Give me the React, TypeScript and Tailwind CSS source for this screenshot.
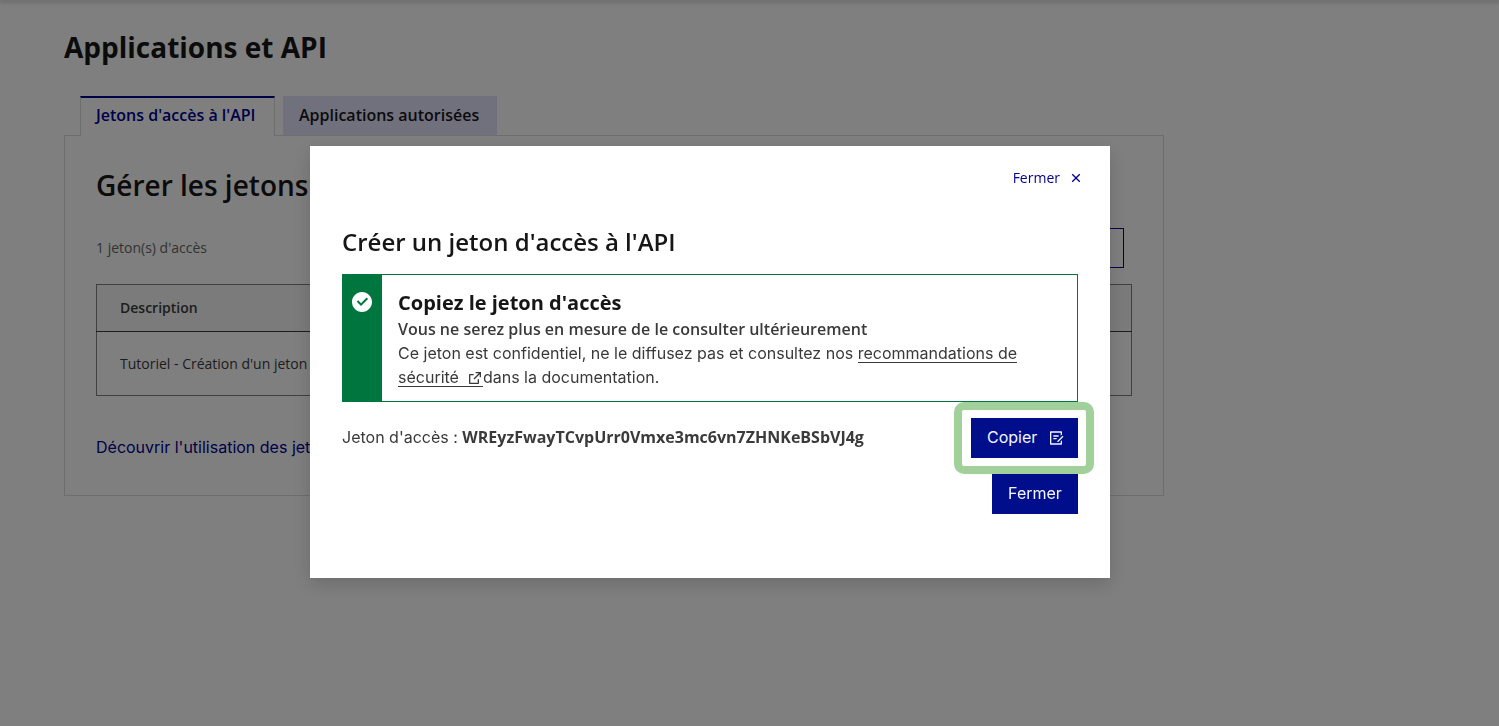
import React from "react";
import { RiCheckboxCircleFill, RiCloseLine, RiDraftLine, RiExternalLinkLine } from "react-icons/ri";

function Tabs() {
  return (
    <div role="tablist" className="relative z-10 -mb-px flex gap-2 px-4 text-base font-semibold leading-6">
      <button
        role="tab"
        aria-selected="true"
        className="h-10 w-[195px] whitespace-nowrap border-x border-t-2 border-x-[#dddddd] border-t-[#000091] bg-white px-[15px] pb-1 text-left text-[#000091]"
      >
        Jetons d'accès à l'API
      </button>
      <button
        role="tab"
        aria-selected="false"
        className="h-[39px] w-[214px] whitespace-nowrap bg-[#e3e3fd] px-4 pb-0.5 text-left text-[#161616]"
      >
        Applications autorisées
      </button>
    </div>
  );
}

function TokensPanel() {
  return (
    <section role="tabpanel" className="border border-[#dddddd] px-[31px] pb-9 pt-[31px]">
      <h2 className="text-[28px] font-semibold leading-9 text-[#161616]">Gérer les jetons</h2>
      <div className="mt-[25px] flex items-center justify-between pr-2">
        <p className="text-sm leading-6 text-[#666666]">1 jeton(s) d'accès</p>
        <button className="h-10 border border-[#000091] px-4 text-[#000091]">Créer un jeton</button>
      </div>
      <table className="mt-4 w-full border-collapse border border-[#808080] text-left text-sm leading-6 text-[#3a3a3a]">
        <thead>
          <tr className="h-[47px] border-b border-[#3a3a3a] bg-[#f6f6f6]">
            <th scope="col" className="px-[23px] font-semibold">Description</th>
          </tr>
        </thead>
        <tbody>
          <tr className="h-16">
            <td className="px-[23px]">Tutoriel - Création d'un jeton</td>
          </tr>
        </tbody>
      </table>
      <a href="#utilisation" className="mt-[39px] block font-['Inter',sans-serif] text-base leading-6 text-[#000091]">
        Découvrir l'utilisation des jetons
      </a>
    </section>
  );
}

function SuccessAlert() {
  return (
    <div role="status" className="mt-4 flex border border-[#00763f]">
      <div className="-my-px -ml-px flex w-10 shrink-0 justify-center bg-[#00763f] pt-4 text-white">
        <RiCheckboxCircleFill className="h-6 w-6" aria-hidden="true" />
      </div>
      <div className="px-4 pb-3 pt-[14px] text-base leading-6">
        <h3 className="text-xl font-bold leading-7 text-[#161616]">Copiez le jeton d'accès</h3>
        <p className="font-semibold">Vous ne serez plus en mesure de le consulter ultérieurement</p>
        <p className="font-['Inter',sans-serif]">
          Ce jeton est confidentiel, ne le diffusez pas et consultez nos{" "}
          <a
            href="#securite"
            className="bg-[linear-gradient(#3a3a3a,#3a3a3a)] bg-[length:100%_1px] bg-bottom bg-no-repeat"
          >
            recommandations de sécurité
            <RiExternalLinkLine className="ml-2 inline h-4 w-4 align-[-3px]" aria-hidden="true" />
          </a>
          dans la documentation.
        </p>
      </div>
    </div>
  );
}

function TokenDialog() {
  return (
    <div
      role="dialog"
      aria-modal="true"
      aria-labelledby="dialog-title"
      className="w-full max-w-[800px] bg-white text-[#3a3a3a] shadow-[0_6px_18px_rgba(0,0,18,0.16)]"
    >
      <div className="flex justify-end px-4 pt-4">
        <button className="flex h-8 items-center gap-2 px-[10px] text-sm text-[#000091]">
          Fermer
          <RiCloseLine className="h-4 w-4" aria-hidden="true" />
        </button>
      </div>
      <div className="px-8 pb-16 pt-8">
        <h2 id="dialog-title" className="text-2xl font-semibold leading-8 text-[#161616]">
          Créer un jeton d'accès à l'API
        </h2>
        <SuccessAlert />
        <div className="mt-4 flex items-center justify-between">
          <p className="pb-0.5 font-['Inter',sans-serif] text-base leading-6">
            Jeton d'accès :{" "}
            <strong className="font-['Open_Sans',sans-serif] font-bold">WREyzFwayTCvpUrr0Vmxe3mc6vn7ZHNKeBSbVJ4g</strong>
          </p>
          <div className="relative">
            <button className="flex h-10 w-[107px] items-center justify-between bg-[#000e8c] pl-4 pr-[14px] font-['Inter',sans-serif] text-base text-[#f5f5fe]">
              <span className="pb-0.5">Copier</span>
              <RiDraftLine className="h-4 w-4" aria-hidden="true" />
            </button>
            <span className="pointer-events-none absolute -inset-y-4 -left-[17px] -right-4 rounded-[10px] border-8 border-[#a1d09a]" />
          </div>
        </div>
        <div className="mt-4 flex justify-end">
          <button className="h-10 w-[86px] bg-[#000e8c] pb-0.5 font-['Inter',sans-serif] text-base text-[#f5f5fe]">
            Fermer
          </button>
        </div>
      </div>
    </div>
  );
}

export default function App() {
  return (
    <div className="min-h-screen bg-white font-['Open_Sans',sans-serif]">
      <div className="h-0 shadow-[0_1px_4px_1px_rgba(0,0,18,0.3)]" />
      <main className="max-w-[1164px] pl-16 pt-[29px]">
        <h1 className="mb-[31px] text-[28px] font-bold leading-9 text-[#161616]">Applications et API</h1>
        <Tabs />
        <TokensPanel />
      </main>
      <div className="fixed inset-0 z-20 flex items-center justify-center bg-black/50 pb-0.5 pr-[79px]">
        <TokenDialog />
      </div>
    </div>
  );
}
